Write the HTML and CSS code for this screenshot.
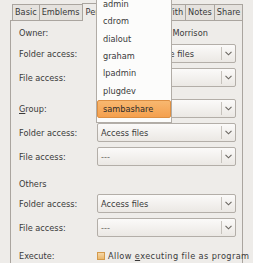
FILE: index.html
```html
<!DOCTYPE html>
<html>
<head>
<meta charset="utf-8">
<link rel="stylesheet" href="styles.css">
</head>
<body>
<div class="window">
  <div class="notebook">
    <div class="tabs">
      <div class="tab">Basic</div>
      <div class="tab">Emblems</div>
      <div class="tab active">Permissions</div>
      <div class="tab">Open With</div>
      <div class="tab">Notes</div>
      <div class="tab last">Share</div>
    </div>
    <div class="panel">
      <div class="row r-owner"><span class="label">Owner:</span><span class="value">graham - Graham Morrison</span></div>
      <div class="row r-combo r-gap4"><span class="label">Folder access:</span><div class="combo"><span class="ctext">Create and delete files</span><span class="cbtn"><svg width="7" height="5" viewBox="0 0 7 5"><polyline points="0.5,0.8 3.5,3.8 6.5,0.8" fill="none" stroke="#6a6660" stroke-width="1.1"/></svg></span></div></div>
      <div class="row r-combo r-gap5"><span class="label">File access:</span><div class="combo"><span class="ctext">Read and write</span><span class="cbtn"><svg width="7" height="5" viewBox="0 0 7 5"><polyline points="0.5,0.8 3.5,3.8 6.5,0.8" fill="none" stroke="#6a6660" stroke-width="1.1"/></svg></span></div></div>
      <div class="row r-combo r-gap12"><span class="label"><u>G</u>roup:</span><div class="combo"><span class="ctext">sambashare</span><span class="cbtn"><svg width="7" height="5" viewBox="0 0 7 5"><polyline points="0.5,0.8 3.5,3.8 6.5,0.8" fill="none" stroke="#6a6660" stroke-width="1.1"/></svg></span></div></div>
      <div class="row r-combo r-gap5"><span class="label">Folder access:</span><div class="combo"><span class="ctext">Access files</span><span class="cbtn"><svg width="7" height="5" viewBox="0 0 7 5"><polyline points="0.5,0.8 3.5,3.8 6.5,0.8" fill="none" stroke="#6a6660" stroke-width="1.1"/></svg></span></div></div>
      <div class="row r-combo r-gap5"><span class="label">File access:</span><div class="combo"><span class="ctext dim">---</span><span class="cbtn"><svg width="7" height="5" viewBox="0 0 7 5"><polyline points="0.5,0.8 3.5,3.8 6.5,0.8" fill="none" stroke="#6a6660" stroke-width="1.1"/></svg></span></div></div>
      <div class="row r-head r-gap11"><span class="label">Others</span></div>
      <div class="row r-combo r-gap3"><span class="label">Folder access:</span><div class="combo"><span class="ctext">Access files</span><span class="cbtn"><svg width="7" height="5" viewBox="0 0 7 5"><polyline points="0.5,0.8 3.5,3.8 6.5,0.8" fill="none" stroke="#6a6660" stroke-width="1.1"/></svg></span></div></div>
      <div class="row r-combo r-gap5"><span class="label">File access:</span><div class="combo"><span class="ctext dim">---</span><span class="cbtn"><svg width="7" height="5" viewBox="0 0 7 5"><polyline points="0.5,0.8 3.5,3.8 6.5,0.8" fill="none" stroke="#6a6660" stroke-width="1.1"/></svg></span></div></div>
      <div class="row r-exec r-gap12"><span class="label">Execute:</span><label class="check"><span class="box"></span><span class="ctext2">Allow <u>e</u>xecuting file as program</span></label></div>
    </div>
  </div>
  <div class="menu">
    <div class="item">admin</div>
    <div class="item">cdrom</div>
    <div class="item">dialout</div>
    <div class="item">graham</div>
    <div class="item">lpadmin</div>
    <div class="item">plugdev</div>
    <div class="item selected">sambashare</div>
  </div>
</div>
</body>
</html>
```

FILE: styles.css
```css
html, body {
  margin: 0;
  padding: 0;
}
body {
  width: 253px;
  height: 263px;
  overflow: hidden;
  background: #eeece9;
  font-family: "DejaVu Sans", sans-serif;
  font-size: 8.2px;
  color: #3a3a3a;
}
.window {
  position: relative;
  width: 253px;
  height: 263px;
  overflow: hidden;
  padding: 4px 10px 0 10px;
  box-sizing: border-box;
}
.notebook {
  display: flex;
  flex-direction: column;
}
.tabs {
  display: flex;
  margin-left: 2px;
  height: 16px;
  align-items: flex-end;
}
.tab {
  height: 16px;
  box-sizing: border-box;
  padding: 0 2px;
  border: 1px solid #aaa59f;
  border-right: none;
  border-bottom: none;
  background: #e5e2de;
  line-height: 15px;
  white-space: nowrap;
}
.tab.last {
  border-right: 1px solid #aaa59f;
}
.tab.active {
  height: 18px;
  padding: 0 3px;
  background: #eeece9;
  line-height: 17px;
  margin-bottom: -1px;
  position: relative;
  z-index: 1;
}
.panel {
  border: 1px solid #aaa59f;
  border-bottom: none;
  height: 243px;
  box-sizing: border-box;
  padding: 0 6px 0 8px;
  display: flex;
  flex-direction: column;
}
.row {
  display: grid;
  grid-template-columns: 78px 139px;
  align-items: center;
  white-space: nowrap;
}
.r-owner { height: 14px; margin-top: 5px; }
.r-combo { height: 19px; }
.r-head { height: 14px; }
.r-exec { height: 14px; }
.r-gap3 { margin-top: 3px; }
.r-gap4 { margin-top: 4px; }
.r-gap5 { margin-top: 5px; }
.r-gap11 { margin-top: 11px; }
.r-gap12 { margin-top: 12px; }
.combo {
  height: 19px;
  box-sizing: border-box;
  border: 1px solid #b3aea8;
  border-radius: 2px;
  background: linear-gradient(#fbfaf9, #ebe8e4);
  display: flex;
  align-items: center;
}
.ctext {
  flex: 1;
  padding-left: 3px;
  overflow: hidden;
}
.ctext.dim {
  color: #6a6762;
}
.cbtn {
  flex: none;
  width: 13px;
  height: 13px;
  border-left: 1px solid #c6c2bc;
  display: flex;
  align-items: center;
  justify-content: center;
}
.check {
  display: flex;
  align-items: center;
}
.box {
  flex: none;
  width: 8px;
  height: 8px;
  box-sizing: border-box;
  border: 1px solid #d49a4c;
  background: linear-gradient(#f6d7a6, #eab86e);
  margin-right: 3px;
  margin-left: 0;
}
.ctext2 {
  letter-spacing: 0.4px;
}
.menu {
  position: absolute;
  z-index: 5;
  left: 96px;
  top: -7px;
  width: 76px;
  box-sizing: border-box;
  border: 1px solid #b1aca6;
  background: #fcfcfb;
  padding: 2px 0 4px 0;
}
.item {
  height: 17.33px;
  line-height: 17.33px;
  padding-left: 6px;
  box-sizing: border-box;
}
.item.selected {
  height: 18px;
  line-height: 17px;
  border: 1px solid #dd8f42;
  border-radius: 2px;
  background: linear-gradient(#f8b870, #f4a04e);
  padding-left: 5px;
  color: #2c2c2c;
}
```
